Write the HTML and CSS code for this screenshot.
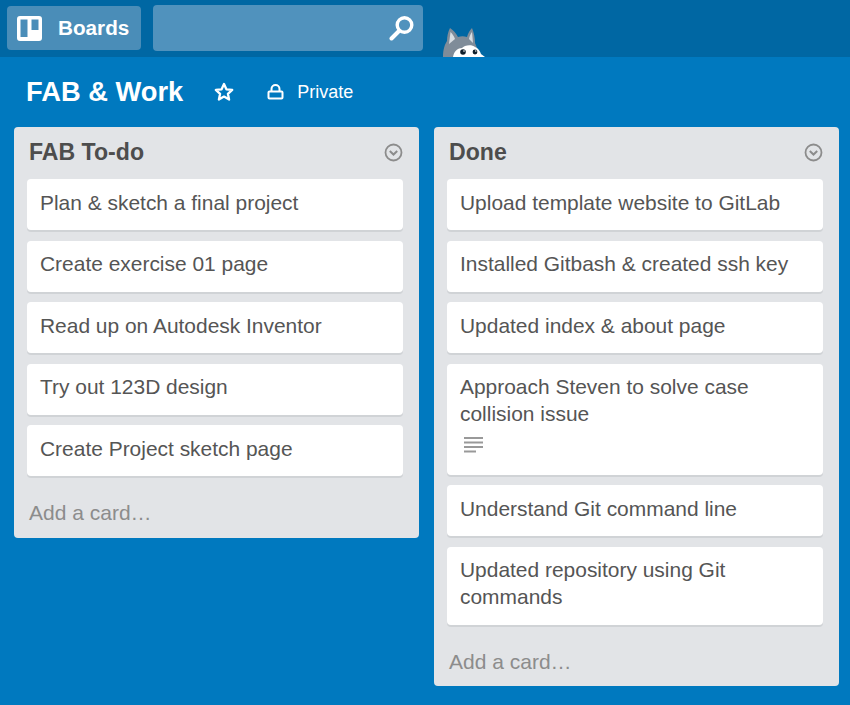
FILE: index.html
```html
<!DOCTYPE html>
<html lang="en">
<head>
<meta charset="utf-8">
<title>FAB &amp; Work</title>
<link rel="stylesheet" href="styles.css">
</head>
<body>
<header class="topbar">
  <a class="boards-btn">
    <svg class="boards-icon" viewBox="0 0 25 25"><path fill="#fff" fill-rule="evenodd" d="M3 0h19a3 3 0 0 1 3 3v19a3 3 0 0 1-3 3H3a3 3 0 0 1-3-3V3a3 3 0 0 1 3-3zm.5 3.500v17.500h7V3.500zm11 0V14h7V3.500z"/></svg>
    <span>Boards</span>
  </a>
  <div class="search">
    <svg class="search-icon" viewBox="0 0 26 26"><circle cx="15.500" cy="10" r="7.300" fill="none" stroke="#fff" stroke-width="3.400"/><path d="M10 16 2.500 23.500" stroke="#fff" stroke-width="4" stroke-linecap="round"/></svg>
  </div>
  <svg class="mascot" viewBox="0 0 44 30">
    <path fill="#7f8c99" d="M2 30c0-8 2-13 4-16 0-5 1-9 3-13 3 2 6 5 8 9 3-1 6-1 9 0 1-4 3-7 5-9 2 5 3 10 3 15 2 4 3 9 4 14z"/>
    <path fill="#d8dde2" d="M9.500 5c2 2 3.500 4 4.500 7l-6 5zM31 5c-1.500 2-2.500 4-3 7l4 4z"/>
    <path fill="#fff" d="M12 30c1-6 5-9 9-9 2-3 10-4 13-1 3 1 5 4 6 7l4 3z"/>
    <circle cx="22" cy="25" r="2.800" fill="#10202c"/>
    <circle cx="34" cy="25" r="2.400" fill="#10202c"/>
    <circle cx="23" cy="24" r=".8" fill="#fff"/>
    <circle cx="34.800" cy="24" r=".7" fill="#fff"/>
  </svg>
</header>
<main class="board">
  <div class="board-head">
    <h1 class="board-title">FAB &amp; Work</h1>
    <svg class="star" viewBox="0 0 20 20"><path fill="none" stroke="#fff" stroke-width="2.300" stroke-linejoin="round" d="m10 2 2.400 5.300 5.800.6-4.300 3.900 1.200 5.700-5.100-2.900-5.100 2.900 1.200-5.700L1.800 7.900l5.800-.6z"/></svg>
    <svg class="lock" viewBox="0 0 17 16"><path fill="none" stroke="#fff" stroke-width="2" d="M4.500 7V5a4 4 0 0 1 8 0v2M2.500 7.500h12a1 1 0 0 1 1 1v5a1 1 0 0 1-1 1h-12a1 1 0 0 1-1-1v-5a1 1 0 0 1 1-1z"/></svg>
    <span class="private">Private</span>
  </div>
  <div class="lists">
    <section class="list">
      <div class="list-head">
        <h2>FAB To-do</h2>
        <svg class="chev" viewBox="0 0 19 19"><circle cx="9.500" cy="9.500" r="8" fill="none" stroke="#8c8c8c" stroke-width="1.800"/><path d="m5.800 8 3.700 3.500L13.200 8" fill="none" stroke="#8c8c8c" stroke-width="2"/></svg>
      </div>
      <div class="card">Plan &amp; sketch a final project</div>
      <div class="card">Create exercise 01 page</div>
      <div class="card">Read up on Autodesk Inventor</div>
      <div class="card">Try out 123D design</div>
      <div class="card">Create Project sketch page</div>
      <div class="add">Add a card…</div>
    </section>
    <section class="list">
      <div class="list-head">
        <h2>Done</h2>
        <svg class="chev" viewBox="0 0 19 19"><circle cx="9.500" cy="9.500" r="8" fill="none" stroke="#8c8c8c" stroke-width="1.800"/><path d="m5.800 8 3.700 3.500L13.200 8" fill="none" stroke="#8c8c8c" stroke-width="2"/></svg>
      </div>
      <div class="card">Upload template website to GitLab</div>
      <div class="card">Installed Gitbash &amp; created ssh key</div>
      <div class="card">Updated index &amp; about page</div>
      <div class="card">Approach Steven to solve case collision issue
        <svg class="desc" viewBox="0 0 19 17"><path stroke="#999" stroke-width="2" d="M0 2h19M0 6.500h19M0 11h19M0 15.500h12"/></svg>
      </div>
      <div class="card">Understand Git command line</div>
      <div class="card">Updated repository using Git commands</div>
      <div class="add">Add a card…</div>
    </section>
  </div>
</main>
</body>
</html>
```
FILE: styles.css
```css
* { box-sizing: border-box; }
html, body { margin: 0; height: 100%; }
body {
  width: 850px;
  height: 705px;
  overflow: hidden;
  background: #0079bf;
  font-family: "Liberation Sans", Arial, sans-serif;
  display: flex;
  flex-direction: column;
}
.topbar {
  height: 57px;
  flex: none;
  background: #0067a3;
  display: flex;
  align-items: flex-start;
  padding: 6px 0 0 7px;
}
.boards-btn {
  width: 134px;
  height: 44px;
  background: #4a8db8;
  border-radius: 4px;
  display: flex;
  align-items: center;
  padding-left: 10px;
  color: #fff;
  font-weight: 700;
  font-size: 20.700px;
}
.boards-icon { width: 25px; height: 25px; margin-right: 16px; }
.search {
  width: 270px;
  height: 46px;
  margin: -1px 0 0 12px;
  background: #5092bd;
  border-radius: 4px;
  display: flex;
  align-items: center;
  justify-content: flex-end;
  padding-right: 8px;
}
.search-icon { width: 26px; height: 26px; }
.mascot { width: 44px; height: 30px; margin: 21px 0 0 18px; }
.board { flex: 1; }
.board-head {
  height: 70px;
  display: flex;
  align-items: center;
  padding-left: 26px;
  color: #fff;
}
.board-title { margin: 0; font-size: 27.300px; font-weight: 700; line-height: 1; }
.star { width: 20px; height: 20px; margin-left: 31px; }
.lock { width: 17px; height: 16px; margin-left: 33px; }
.private { font-size: 18px; margin-left: 13px; }
.lists {
  display: flex;
  align-items: flex-start;
  gap: 15px;
  padding-left: 14px;
}
.list {
  width: 405px;
  background: #e2e4e7;
  border-radius: 4px;
  padding: 0 16px 0 13px;
}
.list-head {
  height: 52px;
  display: flex;
  align-items: center;
  justify-content: space-between;
  padding: 0 0 2px 2px;
  color: #4d4d4d;
}
.list-head h2 { margin: 0; font-size: 23.100px; font-weight: 700; }
.chev { width: 19px; height: 19px; margin-right: 0; }
.card {
  background: #fff;
  border-radius: 4px;
  box-shadow: 0 2px 0 #d0d3d6;
  color: #555;
  font-size: 20.950px;
  line-height: 27px;
  padding: 9.500px 13px 14.500px;
  margin-bottom: 10.500px;
}
.desc { display: block; width: 19px; height: 17px; margin: 9px 0 7px 4px; }
.add {
  color: #8c8c8c;
  font-size: 21px;
  line-height: 27px;
  padding: 12.500px 2px 11.500px;
}
```
